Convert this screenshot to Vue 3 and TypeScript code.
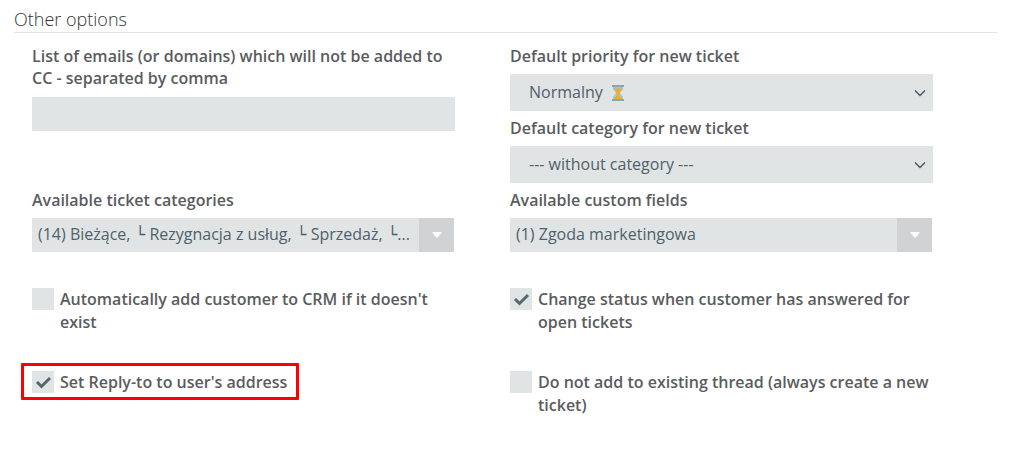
<script setup lang="ts">
import { ref } from 'vue'

const ignoredEmails = ref('')
const priority = ref('normal')
const category = ref('none')
const autoAdd = ref(false)
const changeStatus = ref(true)
const replyTo = ref(true)
const newThread = ref(false)
const categories: string[] = ['Bieżące', 'Rezygnacja z usług', 'Sprzedaż']
</script>

<template>
  <form class="options" @submit.prevent>
    <h2 class="title">Other options</h2>
    <div class="grid">
      <div class="cell">
        <label class="label" for="emails">List of emails (or domains) which will not be added to CC - separated by comma</label>
        <input id="emails" v-model="ignoredEmails" class="control text" type="text" />
      </div>

      <div class="cell">
        <label class="label" for="priority">Default priority for new ticket</label>
        <div class="select-wrap">
          <select id="priority" v-model="priority" class="control select">
            <option value="normal">Normalny</option>
          </select>
          <svg class="hourglass" viewBox="0 0 12 16" aria-hidden="true">
            <path d="M1 1.500h10v2.700L7.800 8l3.200 3.800v2.700H1v-2.700L4.200 8 1 4.200z" fill="#8fcbf5" />
            <path d="M1.500 3.500h9L7.500 7.300v3.200l2.500 3.500h-8L4.500 10.500V7.300z" fill="#ffa91f" />
            <path d="M0 0h12v2H0zM0 14h12v2H0z" fill="#90a4ae" />
          </svg>
          <svg class="chevron" viewBox="0 0 12 8" aria-hidden="true"><path d="M1 1.500l5 5 5-5" /></svg>
        </div>
        <label class="label" for="category">Default category for new ticket</label>
        <div class="select-wrap">
          <select id="category" v-model="category" class="control select">
            <option value="none">--- without category ---</option>
          </select>
          <svg class="chevron" viewBox="0 0 12 8" aria-hidden="true"><path d="M1 1.500l5 5 5-5" /></svg>
        </div>
      </div>

      <div class="cell">
        <label id="cats-label" class="label" for="cats">Available ticket categories</label>
        <button id="cats" class="control multi" type="button" aria-labelledby="cats-label cats-value">
          <span id="cats-value" class="value">(14) <template v-for="(name, i) in categories" :key="name"><template v-if="i > 0"><span class="branch">└</span>&nbsp;</template>{{ name }}, </template><span class="branch">└</span>...</span>
          <span class="toggle"><svg viewBox="0 0 10 6" aria-hidden="true"><path d="M1 0h8q1 0 .5 1L6 5q-1 1-2 0L.5 1Q0 0 1 0z" /></svg></span>
        </button>
      </div>

      <div class="cell">
        <label id="fields-label" class="label" for="fields">Available custom fields</label>
        <button id="fields" class="control multi" type="button" aria-labelledby="fields-label fields-value">
          <span id="fields-value" class="value">(1) Zgoda marketingowa</span>
          <span class="toggle"><svg viewBox="0 0 10 6" aria-hidden="true"><path d="M1 0h8q1 0 .5 1L6 5q-1 1-2 0L.5 1Q0 0 1 0z" /></svg></span>
        </button>
      </div>

      <div class="cell check-cell">
        <label class="check">
          <span class="box"><input v-model="autoAdd" type="checkbox" /><svg v-if="autoAdd" viewBox="0 0 22 22" aria-hidden="true"><path d="M5 11l4.500 4.500L18 7" /></svg></span>
          <span>Automatically add customer to CRM if it doesn't exist</span>
        </label>
      </div>
      <div class="cell check-cell">
        <label class="check">
          <span class="box"><input v-model="changeStatus" type="checkbox" /><svg v-if="changeStatus" viewBox="0 0 22 22" aria-hidden="true"><path d="M5 11l4.500 4.500L18 7" /></svg></span>
          <span>Change status when customer has answered for open tickets</span>
        </label>
      </div>
      <div class="cell check-cell">
        <label class="check highlighted">
          <span class="box"><input v-model="replyTo" type="checkbox" /><svg v-if="replyTo" viewBox="0 0 22 22" aria-hidden="true"><path d="M5 11l4.500 4.500L18 7" /></svg></span>
          <span>Set Reply-to to user's address</span>
        </label>
      </div>
      <div class="cell check-cell">
        <label class="check">
          <span class="box"><input v-model="newThread" type="checkbox" /><svg v-if="newThread" viewBox="0 0 22 22" aria-hidden="true"><path d="M5 11l4.500 4.500L18 7" /></svg></span>
          <span>Do not add to existing thread (always create a new ticket)</span>
        </label>
      </div>
    </div>
  </form>
</template>

<style>
body {
  background: #fff;
}
</style>

<style scoped>
.options {
  padding: 7px 13px 0 14px;
  font-family: "Open Sans", "Noto Sans", sans-serif;
  font-size: 16px;
  line-height: 22px;
  color: #5a5c5e;
}
.title {
  margin: 0;
  padding-bottom: 1px;
  border-bottom: 1px solid #e1e3e4;
  font-size: 18px;
  font-weight: 300;
  line-height: 24px;
  color: #333;
}
.grid {
  display: grid;
  grid-template-columns: 1fr 1fr;
  padding: 12px 9px 0 18px;
}
.cell {
  padding-right: 55px;
}
.label {
  display: block;
  padding-bottom: 7px;
  font-weight: 600;
}
.control {
  display: block;
  box-sizing: border-box;
  width: 100%;
  margin: 0;
  border: 0;
  border-radius: 1px;
  background: #e0e4e5;
  color: #4f6169;
  font: inherit;
}
.text {
  height: 34px;
  margin-top: 1px;
  padding: 0 6px;
}
.select-wrap {
  position: relative;
  margin-bottom: 6px;
}
.select {
  height: 37px;
  padding: 0 30px 1px 19px;
  appearance: none;
}
.hourglass {
  position: absolute;
  top: 11px;
  left: 102px;
  width: 12px;
  height: 16px;
}
.chevron {
  position: absolute;
  top: 15px;
  right: 7px;
  width: 12px;
  height: 8px;
  fill: none;
  stroke: #455f69;
  stroke-width: 1.5;
  pointer-events: none;
}
.multi {
  display: flex;
  width: calc(100% - 1px);
  height: 34px;
  padding: 0;
  text-align: left;
  border-radius: 0;
}
.value {
  flex: 1;
  min-width: 0;
  padding-left: 6px;
  overflow: hidden;
  white-space: nowrap;
  line-height: 32px;
}
.branch {
  margin-left: 1px;
  font-family: "DejaVu Sans", sans-serif;
}
.toggle {
  display: flex;
  flex: none;
  align-items: center;
  justify-content: center;
  width: 35px;
  background: #d0d2d3;
}
.toggle svg {
  width: 10px;
  height: 6px;
  fill: #fff;
}
.check-cell {
  padding-top: 36px;
  padding-bottom: 1px;
}
.check {
  display: inline-flex;
  gap: 6px;
  position: relative;
  font-weight: 600;
  line-height: 23px;
}
.box {
  position: relative;
  flex: none;
  width: 22px;
  height: 22px;
}
.box input {
  display: block;
  width: 22px;
  height: 22px;
  margin: 0;
  appearance: none;
  background: #e0e4e5;
}
.box svg {
  position: absolute;
  inset: 0;
  fill: none;
  stroke: #55676f;
  stroke-width: 3;
  pointer-events: none;
}
.highlighted::after {
  content: "";
  position: absolute;
  inset: -8px -12px -6px -11px;
  border: 3px solid #f00;
  border-radius: 1px;
  pointer-events: none;
}
</style>
